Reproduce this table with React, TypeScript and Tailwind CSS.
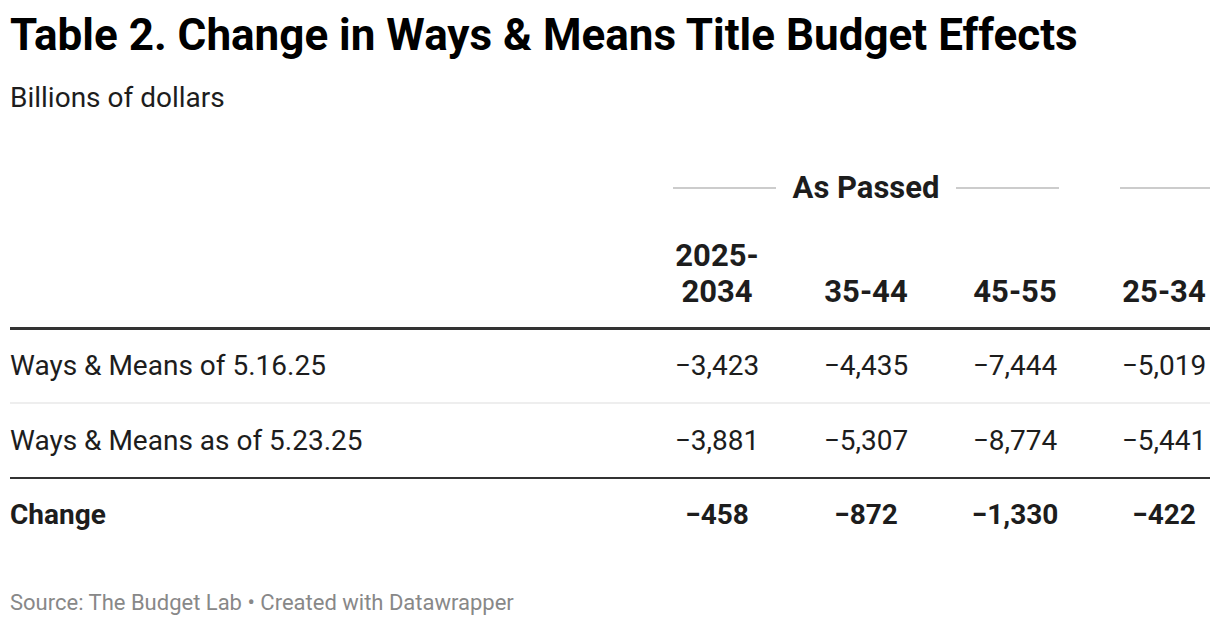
import React from "react";

const rows = [
  { label: "Ways & Means of 5.16.25", vals: ["−3,423", "−4,435", "−7,444", "−5,019"] },
  { label: "Ways & Means as of 5.23.25", vals: ["−3,881", "−5,307", "−8,774", "−5,441"] },
];

export default function App() {
  return (
    <div className="w-[1220px] h-[626px] bg-white px-[10px] font-['Roboto',sans-serif] text-[#1d1d1d] overflow-hidden">
      <h1 className="pt-[9px] text-[44px] leading-[52px] font-bold text-black whitespace-nowrap">
        Table 2. Change in Ways &amp; Means Title Budget Effects
      </h1>
      <p className="mt-[20px] text-[28px] leading-[34px] text-[#1d1d1d]">Billions of dollars</p>

      <div className="mt-[55px]">
        <div className="grid grid-cols-[1fr_88px_88px_88px_88px] gap-x-[61px] pr-[2px] h-[36px] items-center">
          <div />
          <div className="col-span-3 flex items-center gap-[17px]">
            <div className="flex-1 h-[2px] bg-[#cccccc]" />
            <div className="text-[31px] leading-[36px] font-bold">As Passed</div>
            <div className="flex-1 h-[2px] bg-[#cccccc]" />
          </div>
          <div className="h-[2px] bg-[#cccccc] mr-[-2px]" />
        </div>
        <div className="grid grid-cols-[1fr_88px_88px_88px_88px] gap-x-[61px] pr-[2px] items-end pt-[32px] pb-[17px] border-b-[3px] border-[#333333]">
          <div />
          <div className="text-center text-[31px] leading-[36px] font-bold whitespace-nowrap">
            2025-
            <br />
            2034
          </div>
          <div className="text-center text-[31px] leading-[36px] font-bold whitespace-nowrap">35-44</div>
          <div className="text-center text-[31px] leading-[36px] font-bold whitespace-nowrap">45-55</div>
          <div className="text-center text-[31px] leading-[36px] font-bold whitespace-nowrap">25-34</div>
        </div>
        {rows.map((r, i) => (
          <div
            key={i}
            className={`grid grid-cols-[1fr_88px_88px_88px_88px] gap-x-[61px] pr-[2px] items-center text-[28px] border-b-2 ${
              i === 0 ? "h-[74px] border-[#eeeeee]" : "h-[75px] border-[#333333]"
            }`}
          >
            <div className="whitespace-nowrap">{r.label}</div>
            {r.vals.map((v, j) => (
              <div key={j} className="text-center whitespace-nowrap">
                {v}
              </div>
            ))}
          </div>
        ))}
        <div className="grid grid-cols-[1fr_88px_88px_88px_88px] gap-x-[61px] pr-[2px] items-center text-[28px] font-bold h-[72px]">
          <div>Change</div>
          <div className="text-center">−458</div>
          <div className="text-center">−872</div>
          <div className="text-center">−1,330</div>
          <div className="text-center">−422</div>
        </div>
      </div>

      <p className="mt-[39px] text-[22px] leading-[26px] text-[#888888]">
        Source: The Budget Lab • Created with Datawrapper
      </p>
    </div>
  );
}
